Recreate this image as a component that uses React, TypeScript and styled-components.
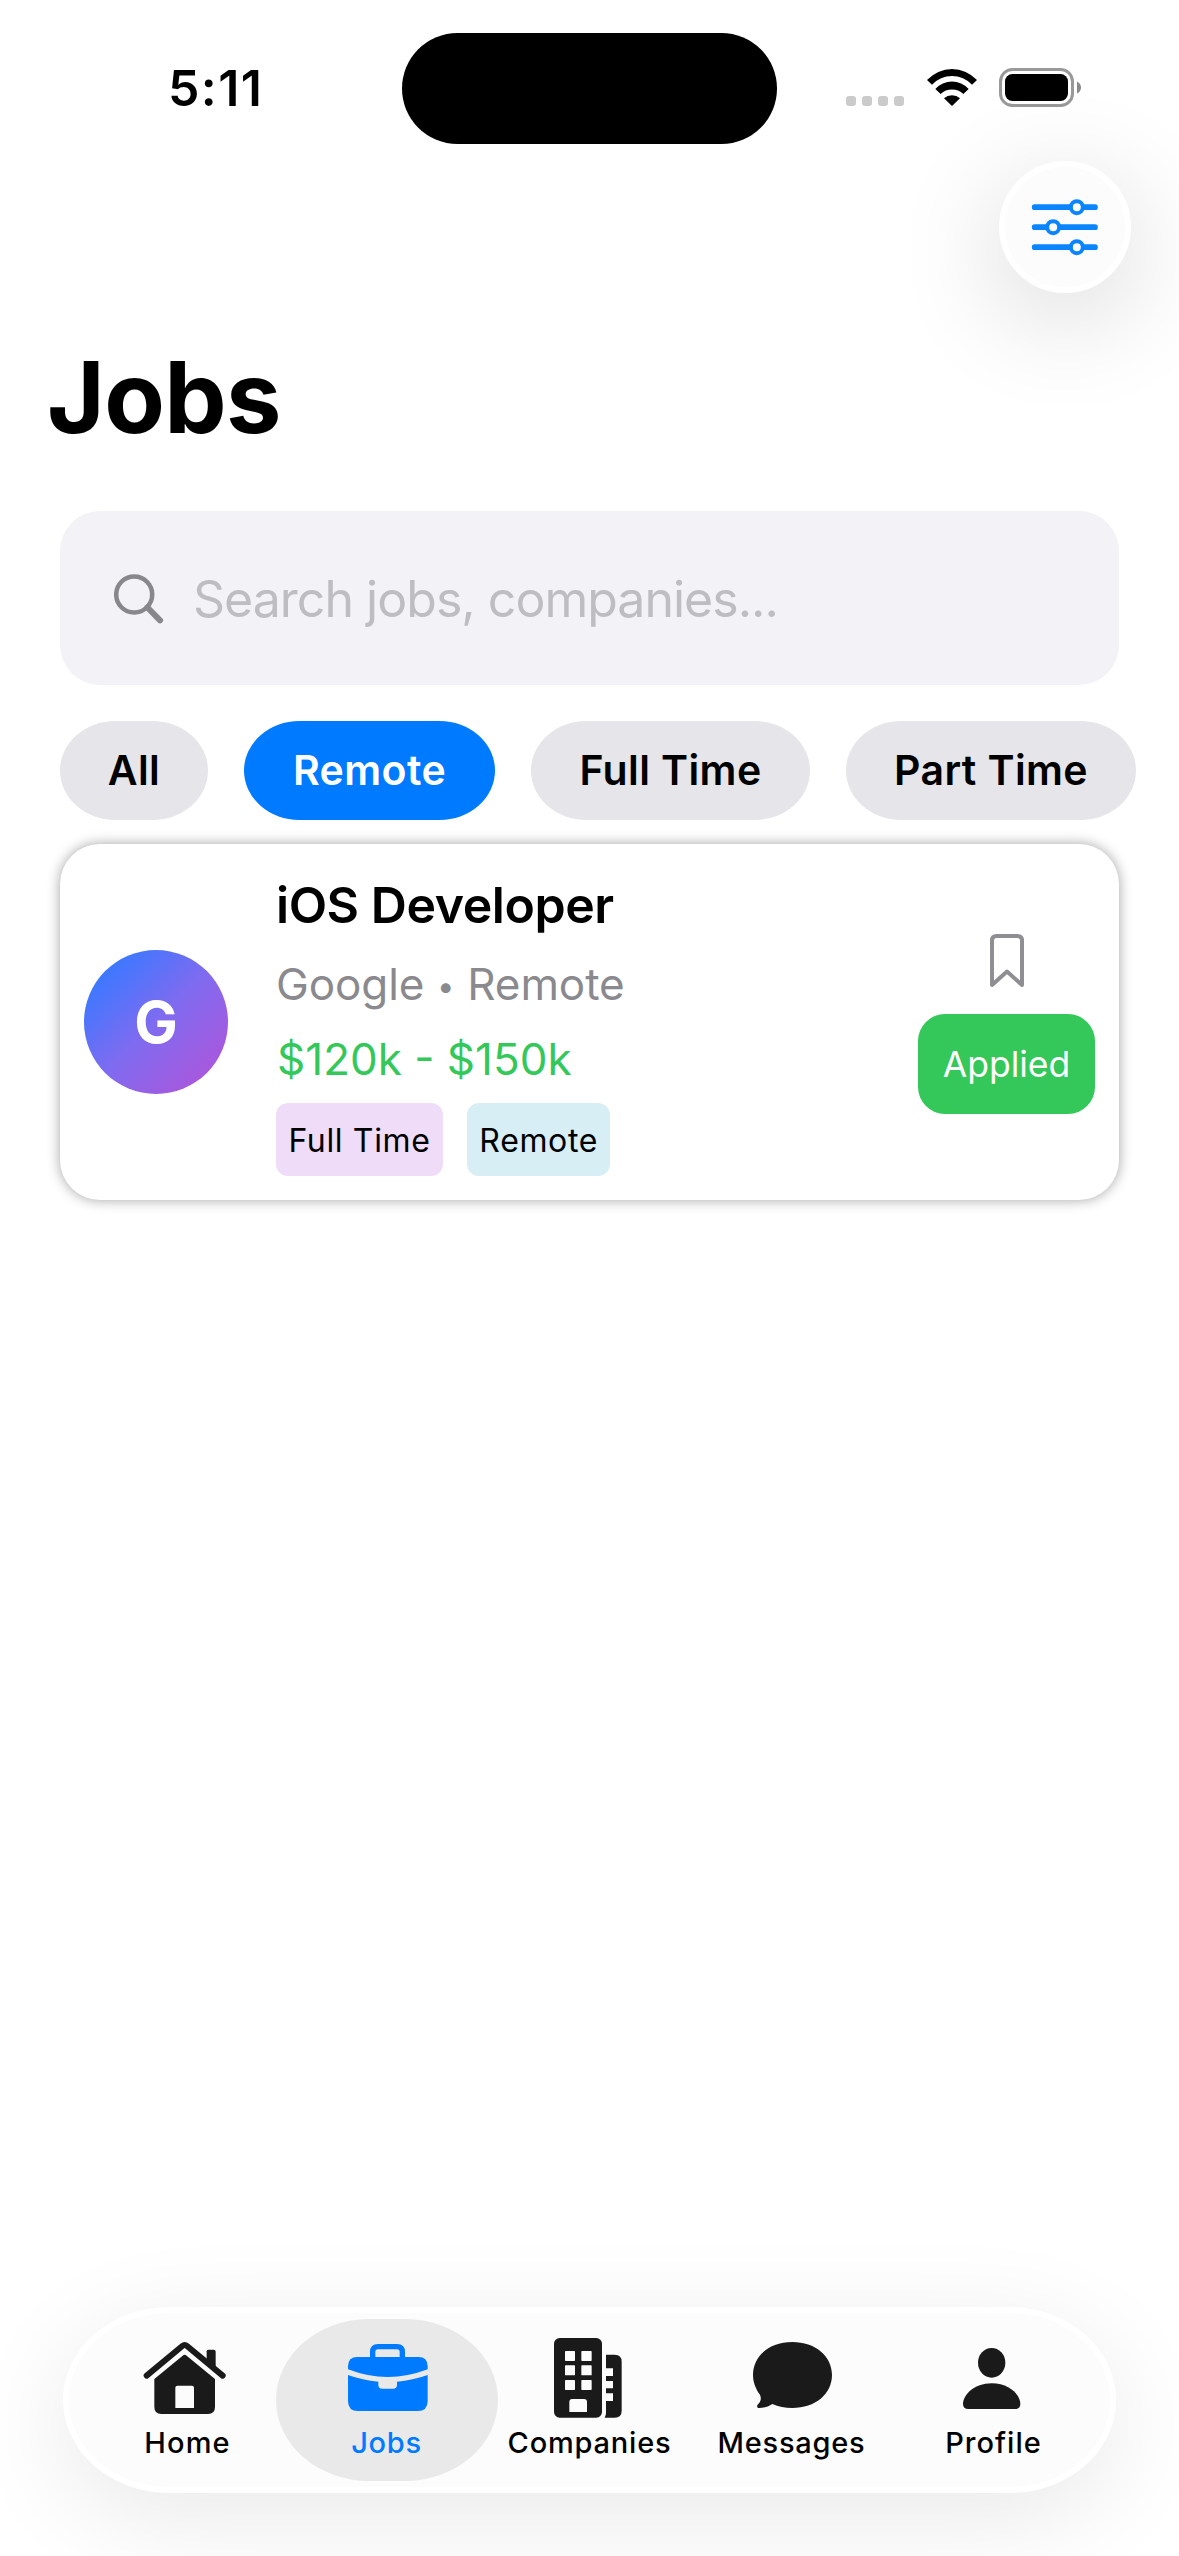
import React from "react";
import styled, { createGlobalStyle } from "styled-components";

const INK = "#1a1a1a";
const BLUE = "#007aff";
const GREEN = "#34c759";

const GlobalStyle = createGlobalStyle`
  *, *::before, *::after { box-sizing: border-box; }
  body {
    margin: 0;
    background: #fff;
    color: #000;
    font-family: Inter, "Liberation Sans", sans-serif;
    overflow: hidden;
  }
  button { font: inherit; border: 0; padding: 0; background: none; color: inherit; }
`;

const Screen = styled.main`
  width: 1179px;
  height: 2556px;
  display: flex;
  flex-direction: column;
  overflow: hidden;
  background: #fff;
`;

/* ---------- status bar ---------- */

const StatusBar = styled.header`
  height: 161px;
  padding-top: 17px;
  display: grid;
  grid-template-columns: 402px 375px 1fr;
  align-items: center;
  flex: none;
`;

const Clock = styled.time`
  padding-left: 168px;
  font-size: 50px;
  font-weight: 600;
  line-height: 60px;
  letter-spacing: 1.4px;
  margin-bottom: 2px;
`;

const Island = styled.div`
  height: 111px;
  margin-bottom: 1px;
  border-radius: 56px;
  background: #000;
`;

const StatusIcons = styled.div`
  display: flex;
  align-items: flex-end;
  padding-left: 69px;
  margin-bottom: 3px;
`;

const SignalDots = styled.div`
  display: flex;
  gap: 6px;
  margin: 0 23px 1px 0;
`;

const SignalDot = styled.span`
  width: 10px;
  height: 10px;
  border-radius: 3px;
  background: #cbcbcb;
`;

const WifiIcon = styled.svg`
  width: 50px;
  height: 37px;
  margin: 0 22px 1px 0;
`;

const BatteryIcon = styled.svg`
  width: 83px;
  height: 39px;
`;

/* ---------- header ---------- */

const Toolbar = styled.div`
  display: flex;
  justify-content: flex-end;
  padding-right: 48px;
  flex: none;
`;

const FilterButton = styled.button`
  width: 132px;
  height: 132px;
  display: grid;
  place-items: center;
  border: 6px solid #fff;
  border-radius: 50%;
  background: #fcfcfc;
  box-shadow: 0 24px 110px rgba(0, 0, 0, 0.16);

  svg { width: 72px; height: 60px; }
`;

const Title = styled.h1`
  margin: 43px 0 0;
  padding-left: 47px;
  font-size: 99px;
  font-weight: 700;
  line-height: 122px;
  letter-spacing: -0.7px;
`;

const SearchField = styled.div`
  display: flex;
  align-items: center;
  flex: none;
  height: 174px;
  margin: 53px 60px 0;
  padding: 1px 54px 0;
  border-radius: 40px;
  background: #f2f2f7;

  svg { width: 50px; height: 50px; margin-right: 29px; }
`;

const Placeholder = styled.span`
  padding-top: 1px;
  font-size: 50px;
  line-height: 60px;
  letter-spacing: -0.98px;
  color: #bdbdc2;
`;

const Chips = styled.nav`
  display: flex;
  gap: 36px;
  flex: none;
  margin-top: 36px;
  padding-left: 60px;
`;

const Chip = styled.button<{ $active?: boolean; $width: number }>`
  width: ${(p) => p.$width}px;
  height: 99px;
  padding-bottom: 2px;
  flex: none;
  border-radius: 56px / 50px;
  background: ${(p) => (p.$active ? BLUE : "#e5e5ea")};
  color: ${(p) => (p.$active ? "#fff" : "#000")};
  font-size: 41px;
  font-weight: 600;
  letter-spacing: 0.4px;
  white-space: nowrap;
`;

/* ---------- job card ---------- */

const Card = styled.article`
  display: flex;
  height: 356px;
  flex: none;
  margin: 24px 60px 0;
  padding: 0 24px;
  border-radius: 40px;
  background: #fff;
  box-shadow: 0 0 13px rgba(0, 0, 0, 0.36);
`;

const Avatar = styled.div`
  width: 144px;
  height: 144px;
  margin: 106px 48px 0 0;
  display: grid;
  place-items: center;
  border-radius: 50%;
  background: linear-gradient(135deg, #1f78ff, #3d78ff 15%, #7f6bf0 50%, #a659de 85%, #af52de);
  color: #fff;
  font-size: 58px;
  font-weight: 700;
  line-height: 144px;
`;

const Info = styled.div`
  flex: 1;
  padding-top: 31px;
`;

const JobTitle = styled.h2`
  margin: 0;
  font-size: 50px;
  font-weight: 600;
  line-height: 60px;
  letter-spacing: -0.45px;
`;

const Company = styled.p`
  margin: 22px 0 0;
  font-size: 44px;
  line-height: 54px;
  letter-spacing: -0.1px;
  color: #8a8a8e;
  white-space: nowrap;
`;

const Bullet = styled.span`
  display: inline-block;
  width: 43px;
  text-align: center;
  white-space: pre;
  font-size: 31px;
  line-height: 0;
  vertical-align: 3px;
`;

const Salary = styled.p`
  margin: 21px 0 0;
  padding-left: 1px;
  font-size: 44px;
  line-height: 54px;
  color: ${GREEN};
`;

const Tags = styled.div`
  display: flex;
  gap: 24px;
  margin-top: 17px;
`;

const Tag = styled.span<{ $tint: string }>`
  height: 73px;
  padding: 0 12.4px;
  border-radius: 12px;
  background: ${(p) => p.$tint};
  font-size: 32px;
  line-height: 75px;
  letter-spacing: 0.65px;
`;

const Actions = styled.div`
  width: 177px;
  display: flex;
  flex-direction: column;
  align-items: center;
  padding-top: 89px;

  svg { width: 36px; height: 56px; }
`;

const ApplyButton = styled.button`
  width: 177px;
  height: 100px;
  margin-top: 25px;
  border-radius: 27px;
  background: ${GREEN};
  color: #fff;
  font-size: 35.5px;
`;

/* ---------- tab bar ---------- */

const TabBar = styled.nav`
  display: flex;
  justify-content: center;
  flex: none;
  height: 186px;
  margin: auto 63px 63px;
  padding: 6px 1px 0 0;
  border: 6px solid #fff;
  border-radius: 106px / 93px;
  background: #fcfcfc;
  box-shadow: 0 24px 104px rgba(0, 0, 0, 0.092);
`;

const TabItem = styled.button<{ $active?: boolean }>`
  display: flex;
  flex-direction: column;
  align-items: center;
  width: 222px;
  height: 162px;
  margin: 0 -10px;
  padding-top: 17px;
  border-radius: 93px / 81px;
  background: ${(p) => (p.$active ? "#e9e9e9" : "transparent")};
  color: ${(p) => (p.$active ? BLUE : "#000")};

  svg { width: 100px; height: 84px; flex: none; }
`;

const TabLabel = styled.span<{ $shift: number; $spacing: number }>`
  margin-top: 4px;
  padding-left: ${(p) => Math.max(0, p.$shift * 2)}px;
  padding-right: ${(p) => Math.max(0, -p.$shift * 2)}px;
  font-size: 29px;
  font-weight: 500;
  line-height: 37px;
  letter-spacing: ${(p) => p.$spacing}px;
`;

const HomeIcon = () => (
  <svg viewBox="285 168 300 252" fill={INK}>
    <path d="M500 250V214Q500 209 505 209H521Q527 209 527 215V272Z" />
    <path d="M320 287L427 198Q434 192 441 198L548 287" fill="none" stroke={INK} strokeWidth="18" strokeLinecap="round" />
    <path
      fillRule="evenodd"
      d="M428 227Q434 222 440 227L525 297V381Q525 402 504 402H364Q343 402 343 381V297ZM406 384H462V323Q462 317 456 317H412Q406 317 406 323Z"
    />
  </svg>
);

const JobsIcon = () => (
  <svg viewBox="891 168 300 252" fill={BLUE}>
    <path d="M998 236V216Q998 200 1014 200H1071Q1087 200 1087 216V236" fill="none" stroke={BLUE} strokeWidth="16" />
    <path d="M952 231H1135Q1163 231 1163 259V268Q1043 314 924 268V259Q924 231 952 231Z" />
    <path d="M924 285Q968 301 1015 305V314Q1015 326 1027 326H1059Q1071 326 1071 314V305Q1118 301 1163 285V363Q1163 393 1133 393H954Q924 393 924 363Z" />
  </svg>
);

const CompaniesIcon = () => (
  <svg viewBox="177 168 300 252" fill={INK}>
    <rect x="222" y="174" width="144" height="239" rx="17" />
    <path d="M378 224H404Q425 224 425 245V392Q425 413 404 413H374Q378 406 378 398V363H399V340H378V325H399V303H378V288H399V265H378Z" />
    <g fill="#fcfcfc">
      {[213, 256, 300].map((y) => (
        <React.Fragment key={y}>
          <rect x="255" y={y} width="30" height="30" rx="2" />
          <rect x="304" y={y} width="31" height="30" rx="2" />
        </React.Fragment>
      ))}
      <path d="M268 396V366Q268 357 277 357H312Q321 357 321 366V396Z" />
    </g>
  </svg>
);

const MessagesIcon = () => (
  <svg viewBox="783 168 300 252" fill={INK}>
    <path d="M937 186C1006 186 1056 228 1056 285C1056 342 1006 384 937 384C915 384 895 380 877 372C867 379 855 384 838 384C831 384 829 378 834 373C843 364 845 354 839 343C827 326 819 306 819 285C819 228 868 186 937 186Z" />
  </svg>
);

const ProfileIcon = () => (
  <svg viewBox="429 168 300 252" fill={INK}>
    <ellipse cx="575" cy="248.500" rx="41" ry="44.500" />
    <path d="M489 372C489 345 522 310 575 310S661 345 661 372Q661 387 645 387H505Q489 387 489 372Z" />
  </svg>
);

const TABS = [
  { label: "Home", Icon: HomeIcon, shift: 2.5, spacing: 1.2 },
  { label: "Jobs", Icon: JobsIcon, shift: -0.5, spacing: 0.7 },
  { label: "Companies", Icon: CompaniesIcon, shift: 0.5, spacing: 0.8 },
  { label: "Messages", Icon: MessagesIcon, shift: 0.5, spacing: 0.78 },
  { label: "Profile", Icon: ProfileIcon, shift: 0.5, spacing: 1 },
];

const FILTERS = [
  { label: "All", width: 148 },
  { label: "Remote", width: 251 },
  { label: "Full Time", width: 279 },
  { label: "Part Time", width: 290 },
];

export default function App() {
  const activeFilter = "Remote";
  const activeTab = "Jobs";

  return (
    <>
      <GlobalStyle />
      <Screen>
        <StatusBar>
          <Clock>5:11</Clock>
          <Island />
          <StatusIcons>
            <SignalDots>
              <SignalDot />
              <SignalDot />
              <SignalDot />
              <SignalDot />
            </SignalDots>
            <WifiIcon viewBox="440 147 150 111">
              <path d="M440 180A102 102 0 0 1 590 180L575 194A82 82 0 0 0 455 194Z" />
              <path d="M465 207A67 67 0 0 1 565 207L549 222A50 50 0 0 0 481 222Z" />
              <path d="M491 235A36 36 0 0 1 539 235L515 258Z" />
            </WifiIcon>
            <BatteryIcon viewBox="0 0 83 39">
              <rect x="1.500" y="1.500" width="72" height="36" rx="12" fill="none" stroke="#999" strokeWidth="3" />
              <rect x="6" y="6" width="63" height="27" rx="7.500" />
              <path d="M78 13.500Q82 15.500 82 19.500T78 25.500Z" fill="#8a8a8a" />
            </BatteryIcon>
          </StatusIcons>
        </StatusBar>

        <Toolbar>
          <FilterButton aria-label="Filters">
            <svg viewBox="747 531 216 180" fill="none" stroke="#0a84ff" strokeLinecap="round">
              <path d="M764 561.500H945M764 621.500H945M764 681.500H945" strokeWidth="17" />
              <g fill="#fcfcfc" strokeWidth="12">
                <circle cx="890.500" cy="561.500" r="18" />
                <circle cx="819.500" cy="621.500" r="18" />
                <circle cx="890.500" cy="681.500" r="18" />
              </g>
            </svg>
          </FilterButton>
        </Toolbar>

        <Title>Jobs</Title>

        <SearchField>
          <svg viewBox="0 0 50 50" fill="none" stroke="#87878c" strokeLinecap="round">
            <circle cx="20.200" cy="20.500" r="18" strokeWidth="4.500" />
            <path d="M33.500 33.500L46 46.300" strokeWidth="6" />
          </svg>
          <Placeholder>Search jobs, companies...</Placeholder>
        </SearchField>

        <Chips>
          {FILTERS.map((f) => (
            <Chip key={f.label} $width={f.width} $active={f.label === activeFilter}>
              {f.label}
            </Chip>
          ))}
        </Chips>

        <Card>
          <Avatar>G</Avatar>
          <Info>
            <JobTitle>iOS Developer</JobTitle>
            <Company>
              Google<Bullet> • </Bullet>Remote
            </Company>
            <Salary>$120k - $150k</Salary>
            <Tags>
              <Tag $tint="#efdcf8">Full Time</Tag>
              <Tag $tint="#d6eef4">Remote</Tag>
            </Tags>
          </Info>
          <Actions>
            <svg viewBox="0 0 36 56" fill="none" stroke="#8e8e93" strokeWidth="4" strokeLinejoin="round">
              <path d="M3 52V7.500Q3 3 7.500 3H28.500Q33 3 33 7.500V52L18 38.500Z" />
            </svg>
            <ApplyButton>Applied</ApplyButton>
          </Actions>
        </Card>

        <TabBar>
          {TABS.map(({ label, Icon, shift, spacing }) => (
            <TabItem key={label} $active={label === activeTab}>
              <Icon />
              <TabLabel $shift={shift} $spacing={spacing}>{label}</TabLabel>
            </TabItem>
          ))}
        </TabBar>
      </Screen>
    </>
  );
}
